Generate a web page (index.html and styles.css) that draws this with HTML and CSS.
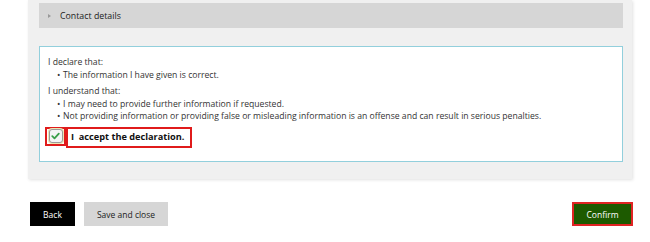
FILE: index.html
```html
<!DOCTYPE html>
<html lang="en">
<head>
    <meta charset="UTF-8">
    <meta name="viewport" content="width=device-width, initial-scale=1.0">
    <title>Declaration</title>
    <link rel="stylesheet" href="styles.css">
</head>
<body>
    <div class="panel">
        <div class="section-bar">
            <span class="arrow"></span>
            <span class="section-title">Contact details</span>
        </div>

        <div class="declaration">
            <p class="lead">I declare that:</p>
            <ul class="points">
                <li>The information I have given is correct.</li>
            </ul>
            <p class="lead second">I understand that:</p>
            <ul class="points">
                <li>I may need to provide further information if requested.</li>
                <li>Not providing information or providing false or misleading information is an offense and can result in serious penalties.</li>
            </ul>

            <div class="accept-row">
                <span class="check-wrap">
                    <span class="check-box">
                        <svg width="9" height="8" viewBox="0 0 9 8">
                            <path d="M1.3 4.2 L3.5 6.3 L7.8 1.6" fill="none" stroke="#3a9e48" stroke-width="1.8" stroke-linecap="round" stroke-linejoin="round"/>
                        </svg>
                    </span>
                </span>
                <label class="accept-label">I&nbsp; accept the declaration.</label>
            </div>
        </div>
    </div>

    <div class="actions">
        <div class="left-actions">
            <button class="btn btn-back">Back</button>
            <button class="btn btn-save">Save and close</button>
        </div>
        <button class="btn btn-confirm">Confirm</button>
    </div>
</body>
</html>
```

FILE: styles.css
```css
body{
    margin: 0;
    background: #fff;
    font-family: 'Open Sans', 'DejaVu Sans', sans-serif;
    color: #333;
}
.panel{
    margin-left: 28px;
    width: 604px;
    box-sizing: border-box;
    padding: 3px 9px 17px 11px;
    background: #f0f0f0;
    box-shadow: 1px 1px 3px rgba(0,0,0,0.12);
}
.section-bar{
    height: 25px;
    background: #d6d6d6;
    display: flex;
    align-items: center;
    padding-left: 9px;
}
.arrow{
    width: 0;
    height: 0;
    border-top: 2.5px solid transparent;
    border-bottom: 2.5px solid transparent;
    border-left: 3px solid #999;
    margin-right: 9px;
}
.section-title{
    font-size: 8.8px;
    color: #222;
}
.declaration{
    margin-top: 18px;
    height: 116px;
    box-sizing: border-box;
    background: #fff;
    border: 1px solid #92cfdc;
    padding: 9px 8px 0 8px;
    font-size: 8.65px;
    line-height: 12.6px;
}
.lead{
    margin: 0;
}
.lead.second{
    margin-top: 4px;
}
.points{
    margin: 0;
    padding: 0 0 0 9px;
    list-style: none;
}
.points li{
    display: flex;
}
.points li::before{
    content: "\2022";
    width: 6px;
    font-size: 9px;
}
.accept-row{
    margin-top: 4px;
    display: flex;
    align-items: flex-start;
    margin-left: -3px;
}
.check-wrap{
    width: 21px;
    height: 19px;
    box-sizing: border-box;
    border: 2px solid #e01b1b;
    display: flex;
    align-items: center;
    justify-content: center;
}
.check-box{
    width: 14px;
    height: 14px;
    box-sizing: border-box;
    border: 1px solid #9a9a9a;
    border-radius: 3px;
    background: #f4f4f4;
    display: flex;
    align-items: center;
    justify-content: center;
    box-shadow: 0 0 0 1px #ece6b4;
}
.accept-label{
    height: 21px;
    box-sizing: border-box;
    border: 2px solid #e01b1b;
    padding: 0 6px 0 3px;
    font-size: 9.2px;
    font-weight: bold;
    color: #111;
    display: flex;
    align-items: center;
    white-space: nowrap;
}
.actions{
    margin: 23px 17px 0 30px;
    display: flex;
    justify-content: space-between;
}
.left-actions{
    display: flex;
    gap: 9px;
}
.btn{
    height: 24px;
    border: 0;
    font-family: 'Open Sans', 'DejaVu Sans', sans-serif;
    font-size: 8.5px;
    padding: 0;
    cursor: pointer;
}
.btn-back{
    width: 45px;
    background: #000;
    color: #fff;
}
.btn-save{
    width: 84px;
    background: #d6d6d6;
    color: #222;
}
.btn-confirm{
    width: 61px;
    background: #1d5a00;
    color: #fff;
    border: 2px solid #e02424;
}
```
